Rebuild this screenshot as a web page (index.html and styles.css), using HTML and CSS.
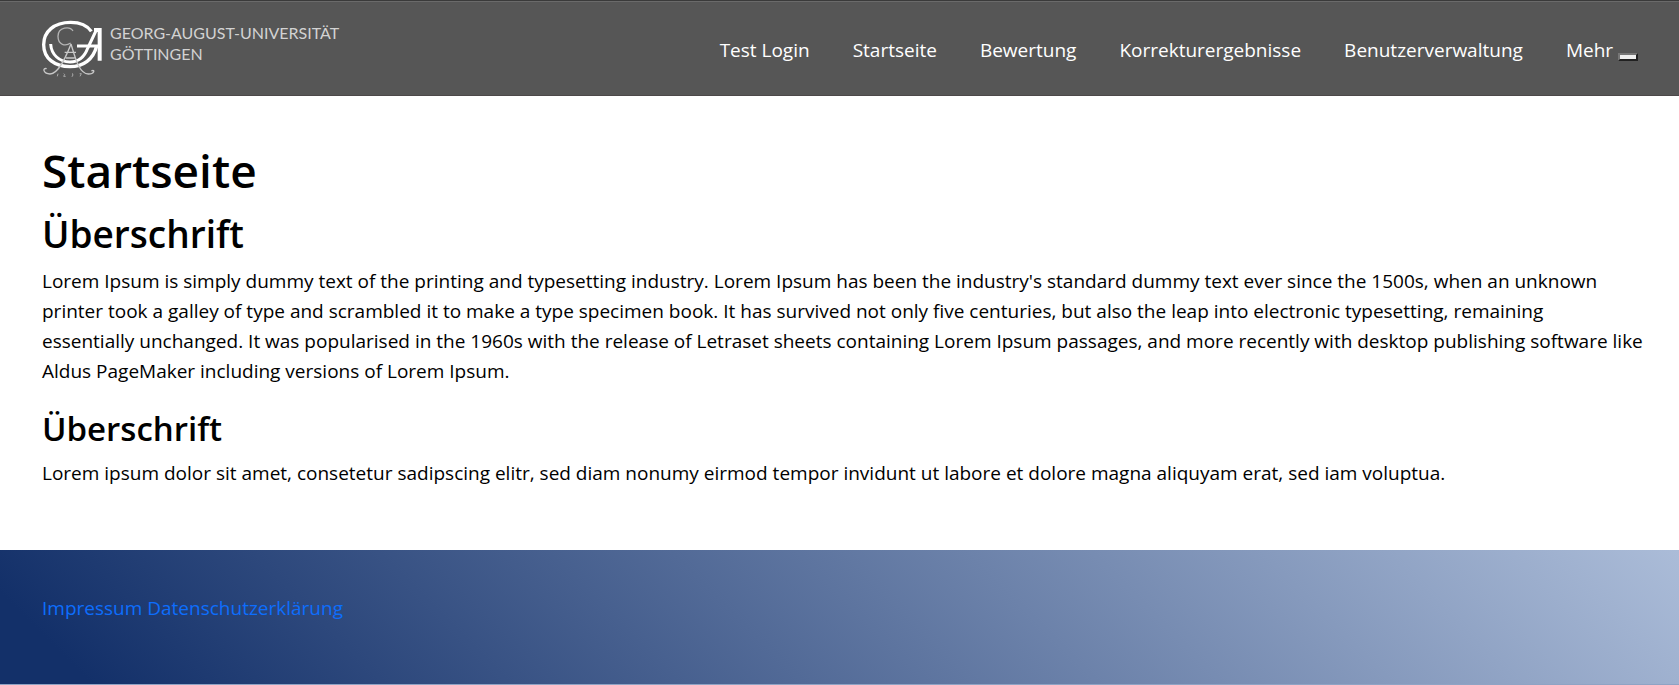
FILE: index.html
```html
<!DOCTYPE html>
<html lang="de">
<head>
<meta charset="utf-8">
<title>Startseite</title>
<link rel="stylesheet" href="styles.css">
</head>
<body>
<header class="header">
  <a class="brand" href="#" aria-label="Georg-August-Universität Göttingen">
    <svg class="brand-mark" viewBox="36 60 183 174" fill="none" aria-hidden="true">
      <path d="M184 94 C170 74 150 67 122 67 C72 67 41 95 41 134 C41 176 75 200 120 200 C160 200 190 178 200 138" stroke="#fff" stroke-width="10"/>
      <path d="M62 132 C64 164 88 186 120 186 C145 186 163 172 173 145 L199 90" stroke="#fff" stroke-width="9"/>
      <path d="M141 138 H208" stroke="#fff" stroke-width="9"/>
      <path d="M209 182 V90 H192" stroke="#fff" stroke-width="12"/>
      <path d="M129 93 C120 78 84 80 84 109 C84 135 106 140 122 129" stroke="#b4b4b4" stroke-width="4"/>
      <path d="M123 132 C108 170 86 222 60 222 C40 222 36 202 50 206 M123 132 C134 166 146 222 175 222 C194 222 196 207 184 213 M104 157 H138 M108 174 H134" stroke="#c8c8c8" stroke-width="4"/>
      <path d="M84 221 L82 229 M101 221 q6 1 0 8 h6 M126 221 q6 1 1 4 q5 3 -2 4 M149 221 h5 l-4 8" stroke="#aaa" stroke-width="3"/>
    </svg>
    <span class="brand-name">GEORG-AUGUST-UNIVERSITÄT<br>GÖTTINGEN</span>
  </a>
  <nav class="nav">
    <a href="#">Test Login</a>
    <a href="#">Startseite</a>
    <a href="#">Bewertung</a>
    <a href="#">Korrekturergebnisse</a>
    <a href="#">Benutzerverwaltung</a>
    <span class="more"><a href="#">Mehr</a> <button class="more-toggle" type="button" aria-label="Mehr anzeigen"></button></span>
  </nav>
</header>
<main class="content">
  <h1>Startseite</h1>
  <h2>Überschrift</h2>
  <p>Lorem Ipsum is simply dummy text of the printing and typesetting industry. Lorem Ipsum has been the industry's standard dummy text ever since the 1500s, when an unknown printer took a galley of type and scrambled it to make a type specimen book. It has survived not only five centuries, but also the leap into electronic typesetting, remaining essentially&nbsp;unchanged. It was popularised in the 1960s with the release of Letraset sheets containing Lorem Ipsum passages, and more recently with desktop publishing software like Aldus PageMaker including versions of Lorem Ipsum.</p>
  <h3>Überschrift</h3>
  <p>Lorem ipsum dolor sit amet, consetetur sadipscing elitr, sed diam nonumy eirmod tempor invidunt ut labore et dolore magna aliquyam erat, sed iam voluptua.</p>
</main>
<footer class="footer">
  <a href="#">Impressum</a> <a href="#">Datenschutzerklärung</a>
</footer>
</body>
</html>
```
FILE: styles.css
```css
* { box-sizing: border-box; }

body {
  margin: 0;
  background: #fff;
  color: #000;
  font-family: "Open Sans", "Noto Sans", sans-serif;
  font-size: 19px;
  line-height: 30px;
}

a { text-decoration: none; }

.header {
  display: flex;
  align-items: center;
  justify-content: space-between;
  min-height: 96px;
  padding: 0 41px 0 42px;
  background: #565656;
  border-top: 1px solid #3a3a3a;
  border-bottom: 1px solid #4c4849;
  box-shadow: inset 0 1px #6a6a6a;
}

.brand {
  display: flex;
  gap: 7px;
  padding-top: 2px;
  color: #d2d2d2;
}

.brand-mark {
  width: 61px;
  height: 58px;
}

.brand-name {
  padding-top: 2px;
  font-family: Lato, sans-serif;
  font-size: 16px;
  line-height: 21px;
  white-space: nowrap;
}

.nav {
  display: flex;
  gap: 43px;
  padding-top: 4px;
  white-space: nowrap;
}

.nav a { color: #fff; }

.more-toggle {
  width: 20px;
  height: 8px;
  padding: 0;
  border: 2px solid;
  border-color: #767676 #212121 #212121 #767676;
  background: #efefef;
  vertical-align: -2px;
}

.content { padding: 44px 32px 40px 42px; }

h1, h2, h3 {
  margin: 0 0 8px;
  font-weight: 600;
}

h1 { margin-bottom: 10px; font-size: 46px; line-height: 60px; }
h2 { font-size: 37px; line-height: 48px; }
h3 { font-size: 33px; line-height: 42px; }

p { margin: 0 0 22px; }

.footer {
  min-height: 135px;
  padding: 43px 42px;
  background: linear-gradient(45deg, #133069 5%, #abbcd8);
  border-bottom: 1px solid #8fa3c4;
}

.footer a { color: #0d6efd; }
```
